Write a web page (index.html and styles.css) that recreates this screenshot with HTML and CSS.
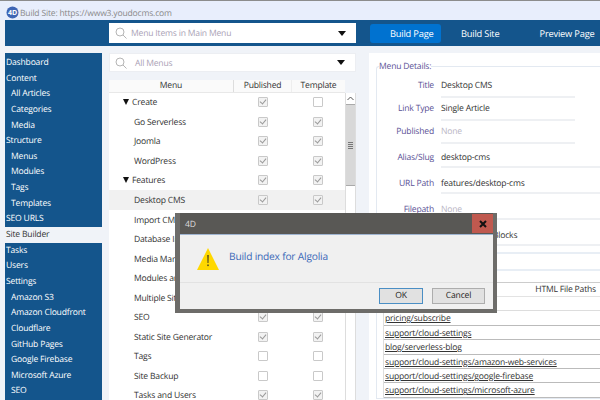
FILE: index.html

```html
<!DOCTYPE html>
<html lang="en">
<head>
    <meta charset="UTF-8">
    <title>Build Site</title>
    <link rel="stylesheet" href="styles.css">
</head>
<body>

    <div class="titlebar">
        <svg class="app-icon" width="13" height="13" viewBox="0 0 13 13"><circle cx="6.5" cy="6.5" r="6" fill="#3f66b5"/><text x="6.5" y="9.2" text-anchor="middle" class="app-icon-text">4D</text></svg>
        <span>Build Site: https://www3.youdocms.com</span>
    </div>

    <div class="toolbar">
        <div class="search search-main">
            <svg class="lens" width="12" height="12" viewBox="0 0 12 12"><circle cx="5" cy="5" r="4" fill="none" stroke="#b5b5b5"/><path d="M8 8l3.5 3.5" stroke="#b5b5b5"/></svg>
            <span class="search-text">Menu Items in Main Menu</span>
            <span class="caret"></span>
        </div>
        <div class="tabs">
            <div class="tab active">Build Page</div>
            <div class="tab">Build Site</div>
            <div class="tab">Preview Page</div>
        </div>
    </div>

    <div class="main">
        <div class="sidebar">
            <div class="nav">Dashboard</div>
            <div class="nav">Content</div>
            <div class="nav sub">All Articles</div>
            <div class="nav sub">Categories</div>
            <div class="nav sub">Media</div>
            <div class="nav">Structure</div>
            <div class="nav sub">Menus</div>
            <div class="nav sub">Modules</div>
            <div class="nav sub">Tags</div>
            <div class="nav sub">Templates</div>
            <div class="nav">SEO URLS</div>
            <div class="nav current">Site Builder</div>
            <div class="nav">Tasks</div>
            <div class="nav">Users</div>
            <div class="nav">Settings</div>
            <div class="nav sub">Amazon S3</div>
            <div class="nav sub">Amazon Cloudfront</div>
            <div class="nav sub">Cloudflare</div>
            <div class="nav sub">GitHub Pages</div>
            <div class="nav sub">Google Firebase</div>
            <div class="nav sub">Microsoft Azure</div>
            <div class="nav sub">SEO</div>
        </div>

        <div class="menus">
            <div class="search search-menus">
                <svg class="lens" width="12" height="12" viewBox="0 0 12 12"><circle cx="5" cy="5" r="4" fill="none" stroke="#b5b5b5"/><path d="M8 8l3.5 3.5" stroke="#b5b5b5"/></svg>
                <span class="search-text">All Menus</span>
                <span class="caret"></span>
            </div>
            <div class="table-head">
                <div class="col-menu">Menu</div>
                <div class="col-box">Published</div>
                <div class="col-box">Template</div>
            </div>
            <div class="table-body">
                <div class="tree">
                    <div class="tree-row group"><span class="name"><i class="arrow"></i>Create</span><span class="cell"><b class="check on"></b></span><span class="cell"><b class="check"></b></span></div>
                    <div class="tree-row"><span class="name">Go Serverless</span><span class="cell"><b class="check on"></b></span><span class="cell"><b class="check on"></b></span></div>
                    <div class="tree-row"><span class="name">Joomla</span><span class="cell"><b class="check on"></b></span><span class="cell"><b class="check on"></b></span></div>
                    <div class="tree-row"><span class="name">WordPress</span><span class="cell"><b class="check on"></b></span><span class="cell"><b class="check on"></b></span></div>
                    <div class="tree-row group"><span class="name"><i class="arrow"></i>Features</span><span class="cell"><b class="check on"></b></span><span class="cell"><b class="check on"></b></span></div>
                    <div class="tree-row selected"><span class="name">Desktop CMS</span><span class="cell"><b class="check on"></b></span><span class="cell"><b class="check on"></b></span></div>
                    <div class="tree-row"><span class="name">Import CMS</span><span class="cell"><b class="check on"></b></span><span class="cell"><b class="check on"></b></span></div>
                    <div class="tree-row"><span class="name">Database Import</span><span class="cell"><b class="check on"></b></span><span class="cell"><b class="check on"></b></span></div>
                    <div class="tree-row"><span class="name">Media Manager</span><span class="cell"><b class="check on"></b></span><span class="cell"><b class="check on"></b></span></div>
                    <div class="tree-row"><span class="name">Modules and Blocks</span><span class="cell"><b class="check on"></b></span><span class="cell"><b class="check on"></b></span></div>
                    <div class="tree-row"><span class="name">Multiple Sites</span><span class="cell"><b class="check on"></b></span><span class="cell"><b class="check on"></b></span></div>
                    <div class="tree-row"><span class="name">SEO</span><span class="cell"><b class="check on"></b></span><span class="cell"><b class="check on"></b></span></div>
                    <div class="tree-row"><span class="name">Static Site Generator</span><span class="cell"><b class="check on"></b></span><span class="cell"><b class="check on"></b></span></div>
                    <div class="tree-row"><span class="name">Tags</span><span class="cell"><b class="check"></b></span><span class="cell"><b class="check"></b></span></div>
                    <div class="tree-row"><span class="name">Site Backup</span><span class="cell"><b class="check"></b></span><span class="cell"><b class="check"></b></span></div>
                    <div class="tree-row"><span class="name">Tasks and Users</span><span class="cell"><b class="check on"></b></span><span class="cell"><b class="check on"></b></span></div>
                </div>
                <div class="scrollbar">
                    <div class="scroll-up"><svg width="7" height="5" viewBox="0 0 7 5"><path d="M.5 4l3-3 3 3" fill="none" stroke="#555"/></svg></div>
                    <div class="scroll-thumb"><span class="grip"></span></div>
                </div>
            </div>
        </div>

        <div class="details">
            <fieldset class="details-box">
                <legend>Menu Details:</legend>
                <div class="field">
                    <div class="field-label">Title</div>
                    <div class="field-value short">Desktop CMS</div>
                </div>
                <div class="field">
                    <div class="field-label">Link Type</div>
                    <div class="field-value short">Single Article</div>
                </div>
                <div class="field">
                    <div class="field-label">Published</div>
                    <div class="field-value short none">None</div>
                </div>
                <div class="field tall">
                    <div class="field-label">Alias/Slug</div>
                    <div class="field-value">desktop-cms</div>
                </div>
                <div class="field tall">
                    <div class="field-label">URL Path</div>
                    <div class="field-value">features/desktop-cms</div>
                </div>
                <div class="field tall">
                    <div class="field-label">Filepath</div>
                    <div class="field-value none">None</div>
                </div>
                <div class="field tall">
                    <div class="field-label">Template</div>
                    <div class="field-value">Modules and Blocks</div>
                </div>
                <div class="spacer-line first"></div>
                <div class="spacer-line"></div>
                <div class="paths">
                    <div class="paths-head">HTML File Paths</div>
                    <div class="path"></div>
                    <div class="path"><u>pricing/subscribe</u></div>
                    <div class="path"><u>support/cloud-settings</u></div>
                    <div class="path"><u>blog/serverless-blog</u></div>
                    <div class="path"><u>support/cloud-settings/amazon-web-services</u></div>
                    <div class="path"><u>support/cloud-settings/google-firebase</u></div>
                    <div class="path"><u>support/cloud-settings/microsoft-azure</u></div>
                </div>
            </fieldset>
        </div>
    </div>

    <div class="dialog">
        <div class="dialog-title">
            <span>4D</span>
            <div class="dialog-close">
                <svg width="8" height="8" viewBox="0 0 8 8"><path d="M1 1l6 6M7 1l-6 6" stroke="#111" stroke-width="2"/></svg>
            </div>
        </div>
        <div class="dialog-body">
            <div class="dialog-message">
                <svg width="22" height="22" viewBox="0 0 22 22"><path d="M11 0L22 22H0z" fill="#ffd800"/><path d="M10.4 7h1.2l-.2 8h-.8z" fill="#222"/><rect x="10.4" y="16.5" width="1.2" height="1.6" fill="#222"/></svg>
                <span class="dialog-text">Build index for Algolia</span>
            </div>
            <div class="dialog-buttons">
                <div class="btn default">OK</div>
                <div class="btn">Cancel</div>
            </div>
        </div>
    </div>

</body>
</html>
```

FILE: styles.css

```css
body {
    margin: 0;
    width: 600px;
    height: 400px;
    overflow: hidden;
    position: relative;
    font-family: "Open Sans", "Noto Sans", Arial, sans-serif;
    font-size: 8.6px;
    letter-spacing: -0.2px;
    text-rendering: geometricPrecision;
    color: #333;
    background-color: #f0f3f8;
}

.titlebar {
    height: 15px;
    padding: 4px 0 0 6px;
    border-top: 1px solid #8c8c8c;
    background: #e8eefc;
    display: flex;
    align-items: center;
    color: #8a8a8a;
    font-size: 8.6px;
    gap: 1px;
}
.app-icon-text {
    font-size: 7px;
    font-weight: bold;
    fill: #fff;
}

.toolbar {
    height: 26px;
    margin-left: 5px;
    background: #14558c;
    display: flex;
    align-items: center;
    padding-left: 104px;
}
.search {
    height: 20px;
    background: #fff;
    display: flex;
    align-items: center;
    box-sizing: border-box;
    color: #aaa2b5;
}
.search-main {
    width: 247px;
    flex-shrink: 0;
    padding-left: 6px;
}
.search-menus {
    height: 19px;
    padding-left: 5px;
    border: 1px solid #eceef2;
}
.search-main .search-text {
    margin-left: 4px;
}
.search-menus .search-text {
    margin-left: 8px;
}
.caret {
    margin-left: auto;
    margin-right: 10px;
    border-left: 4px solid transparent;
    border-right: 4px solid transparent;
    border-top: 5px solid #111;
}
.tabs {
    display: flex;
    flex-shrink: 0;
    margin-left: 14px;
    color: #fff;
    font-size: 9.3px;
}
.tab {
    height: 19px;
    line-height: 19px;
    padding: 0 20px;
    border-radius: 3px;
    white-space: nowrap;
}
.tab.active {
    background: #0072d0;
    width: 71px;
    padding-right: 0;
    box-sizing: border-box;
}

.main {
    display: flex;
    height: 354px;
    padding: 7px 0 0 5px;
    box-sizing: border-box;
}

.sidebar {
    width: 97px;
    flex-shrink: 0;
    background: #14558c;
    color: #fff;
    padding-top: 2px;
    box-sizing: border-box;
}
.nav {
    height: 15.65px;
    line-height: 15.65px;
    padding-left: 1px;
    white-space: nowrap;
}
.nav.sub {
    padding-left: 6px;
}
.nav.current {
    background: #f0f3f8;
    color: #333;
}

.menus {
    width: 247px;
    margin-left: 7px;
    flex-shrink: 0;
}
.table-head {
    display: flex;
    margin-top: 8px;
    height: 12px;
    line-height: 11px;
    background: #fafafa;
    border-bottom: 1px solid #e8e8e8;
    width: 236px;
    text-align: center;
}
.col-menu {
    width: 124px;
    border-right: 1px solid #ddd;
}
.col-box {
    width: 57px;
    border-right: 1px solid #eee;
}
.col-box:last-child {
    width: 53px;
    border-right: 0;
}
.table-body {
    display: flex;
    height: 320px;
    overflow: hidden;
}
.tree {
    width: 236px;
    flex-shrink: 0;
    background: #fff;
    margin-top: -0.5px;
}
.tree-row {
    display: flex;
    height: 19.55px;
    align-items: center;
    white-space: nowrap;
}
.tree-row.selected {
    background: #f1f1f1;
}
.name {
    width: 125px;
    padding-left: 25px;
    box-sizing: border-box;
    overflow: hidden;
}
.group .name {
    padding-left: 14px;
}
.arrow {
    display: inline-block;
    border-left: 3px solid transparent;
    border-right: 3px solid transparent;
    border-top: 6px solid #111;
    margin-right: 3px;
}
.cell {
    width: 57px;
    display: flex;
    justify-content: center;
}
.cell:last-child {
    width: 54px;
}
.check {
    width: 8px;
    height: 8px;
    border: 1px solid #c9c9c9;
    border-radius: 1px;
    background: #fff;
    position: relative;
    display: block;
}
.check.on {
    background: #f2f2f2;
}
.check.on::after {
    content: "";
    position: absolute;
    left: 2px;
    top: 0;
    width: 3px;
    height: 5px;
    border-right: 1px solid #999;
    border-bottom: 1px solid #999;
    transform: rotate(40deg);
}

.scrollbar {
    width: 11px;
    flex-shrink: 0;
    box-sizing: border-box;
    background: #fff;
    border-left: 1px solid #ddd;
    border-right: 1px solid #ddd;
}
.scroll-up {
    height: 11px;
    display: flex;
    align-items: center;
    justify-content: center;
}
.scroll-thumb {
    height: 80px;
    background: #d8d8d8;
    border-top: 1px solid #aaa;
    border-bottom: 1px solid #aaa;
    display: flex;
    align-items: center;
    justify-content: center;
}
.grip {
    width: 5px;
    height: 5px;
    border-top: 1px solid #777;
    border-bottom: 1px solid #777;
    background: linear-gradient(#d8d8d8 1px, #777 1px, #777 2px, #d8d8d8 2px, #d8d8d8 3px, #777 3px, #777 4px, #d8d8d8 4px);
}

.details {
    flex: 1;
    margin-left: 13px;
    background: #fff;
    padding-top: 7px;
    overflow: hidden;
}
.details-box {
    margin: 0 0 0 7px;
    padding: 3px 0 0;
    border: 1px solid #e3e9f1;
    border-right: 0;
    border-radius: 3px 0 0 0;
    min-width: 0;
}
legend {
    margin-left: 2px;
    padding: 0;
    color: #5b5296;
    line-height: 12px;
}
.field {
    display: flex;
    height: 23px;
}
.field.tall {
    height: 26px;
}
.field-label {
    width: 57px;
    text-align: right;
    color: #5b5296;
    line-height: 21px;
    flex-shrink: 0;
}
.field-value {
    flex: 1;
    margin-left: 7px;
    line-height: 21px;
    border-bottom: 2px solid #eef0f3;
    box-sizing: border-box;
    height: 23px;
    white-space: nowrap;
}
.tall .field-label, .tall .field-value {
    line-height: 26px;
}
.tall .field-value {
    height: 24px;
}
.field-value.short {
    flex: none;
    width: 134px;
}
.field-value.none {
    color: #b9b5c4;
}
.spacer-line {
    height: 17px;
    border-bottom: 2px solid #e8eef5;
    box-sizing: border-box;
}
.spacer-line.first {
    height: 6px;
}
.paths {
    margin: 11px 0 0 6px;
    border-left: 1px solid #ddd;
}
.paths-head {
    height: 13px;
    line-height: 13px;
    text-align: right;
    padding-right: 4px;
    border-top: 1px solid #ccc;
    border-bottom: 1px solid #e3e3e3;
    margin-left: -6px;
}
.path {
    height: 14.4px;
    line-height: 15px;
    box-sizing: border-box;
    border-bottom: 1px solid #bbb;
    padding-left: 1px;
    white-space: nowrap;
}
.path:nth-child(2) {
    border-bottom-color: #ddd;
}

.dialog {
    position: absolute;
    left: 175px;
    top: 213px;
    width: 322px;
    height: 100px;
    box-sizing: border-box;
    background: #595855;
    border: 1px solid #6d6c69;
    border-width: 0 4px 4px 5px;
    display: flex;
    flex-direction: column;
}
.dialog-title {
    height: 21px;
    flex-shrink: 0;
    display: flex;
    align-items: center;
    justify-content: space-between;
    color: #ddd;
    padding-left: 5px;
}
.dialog-close {
    width: 21px;
    height: 19px;
    background: #c0594f;
    display: flex;
    align-items: center;
    justify-content: center;
}
.dialog-body {
    flex: 1;
    background: #f0f0f0;
    border-top: 1px solid #9fb4d0;
    display: flex;
    flex-direction: column;
}
.dialog-message {
    height: 48px;
    display: flex;
    padding: 13px 0 0 17px;
    box-sizing: border-box;
    border-bottom: 1px solid #e2e2e2;
}
.dialog-text {
    margin-left: 10px;
    color: #3a68b8;
    font-size: 10.2px;
    line-height: 16px;
}
.dialog-buttons {
    flex: 1;
    display: flex;
    justify-content: flex-end;
    align-items: center;
    gap: 9px;
    padding-right: 8px;
}
.btn {
    width: 51px;
    height: 14px;
    line-height: 13px;
    text-align: center;
    background: #e1e1e1;
    border: 1px solid #adadad;
    color: #222;
}
.btn.default {
    width: 42px;
    border-color: #4a8ec4;
}
```
